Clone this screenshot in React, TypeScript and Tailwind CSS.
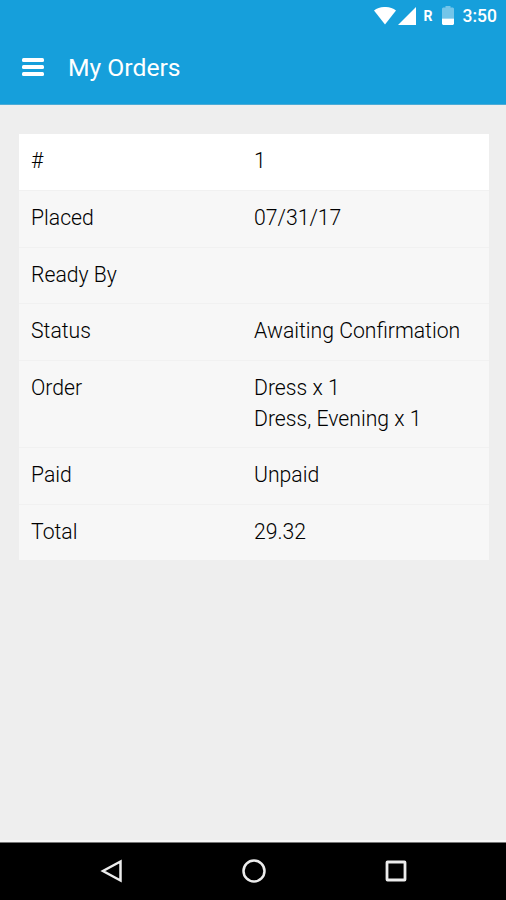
import React from 'react';

interface OrderRow {
  label: string;
  lines: string[];
}

const rows: OrderRow[] = [
  { label: 'Placed', lines: ['07/31/17'] },
  { label: 'Ready By', lines: [''] },
  { label: 'Status', lines: ['Awaiting Confirmation'] },
  { label: 'Order', lines: ['Dress x 1', 'Dress, Evening x 1'] },
  { label: 'Paid', lines: ['Unpaid'] },
  { label: 'Total', lines: ['29.32'] },
];

const StatusBar: React.FC = () => (
  <div className="flex h-[31px] items-center justify-end pr-[9px] text-white">
    <svg className="h-[18px] w-[22px]" viewBox="0 0 22 18" fill="currentColor">
      <path d="M0 3.5C6-1.2 16-1.2 22 3.5L11 17.5z" />
    </svg>
    <svg className="ml-[2px] h-[18px] w-[18px]" viewBox="0 0 18 18" fill="currentColor">
      <path d="M18 0v18H0z" />
    </svg>
    <span className="ml-[8px] w-[9px] pt-px text-[14px] font-bold">R</span>
    <svg className="ml-[9px] h-[19px] w-[12px]" viewBox="0 0 12 19" fill="currentColor">
      <path d="M3.5 0h5v1.5H11l1 1V12.500H0V2.500l1-1h2.500z" opacity="0.4" />
      <path d="M0 12.500h12V18l-1 1H1l-1-1z" />
    </svg>
    <span className="ml-[9px] pt-[2px] text-[17.5px] font-medium">3:50</span>
  </div>
);

const NavBar: React.FC = () => (
  <div className="flex h-[58px] items-center justify-between border-t border-[#777777] bg-black pr-[97px] pb-px pl-[98px] text-[#ececec]">
    <svg className="size-[26px]" viewBox="0 0 26 26" fill="none" stroke="currentColor" strokeWidth={2.5}>
      <path d="M22.500 3.500v19L5 13z" />
    </svg>
    <svg className="size-[26px]" viewBox="0 0 26 26" fill="none" stroke="currentColor" strokeWidth={2.5}>
      <circle cx="13" cy="13" r="10.5" />
    </svg>
    <svg className="size-[26px]" viewBox="0 0 26 26" fill="none" stroke="currentColor" strokeWidth={2.8}>
      <rect x="4" y="4" width="18" height="18" rx="0.5" />
    </svg>
  </div>
);

const App: React.FC = () => {
  return (
    <div className="flex h-[900px] w-[506px] flex-col bg-[#eeeeee] font-['Roboto',sans-serif]">
      <header className="h-[105px] border-b border-[#4cabd6] bg-[#169fdb]">
        <StatusBar />
        <div className="flex h-[72px] items-center pl-[22px] text-white">
          <svg className="h-[18px] w-[22px]" viewBox="0 0 22 18" fill="currentColor">
            <rect width="22" height="4" rx="1.5" />
            <rect y="7" width="22" height="4" rx="1.5" />
            <rect y="14" width="22" height="4" rx="1.5" />
          </svg>
          <h1 className="ml-[24px] pt-px text-[24.7px]">My Orders</h1>
        </div>
      </header>

      <main className="flex-1 pt-[29px] pr-[17px] pl-[19px]">
        <div className="text-[21.2px] leading-[31px] font-light text-black">
          <div className="flex h-[56px] bg-white px-3 pt-[11px]">
            <span className="w-[223px]">#</span>
            <span>1</span>
          </div>
          {rows.map((row) => (
            <div
              key={row.label}
              className="flex min-h-[56.5px] border-t border-[#f1f1f1] bg-[#f7f7f7] px-3 pt-[11px] pb-[13.5px]"
            >
              <span className="w-[223px]">{row.label}</span>
              <div>
                {row.lines.map((line) => (
                  <div key={line}>{line}</div>
                ))}
              </div>
            </div>
          ))}
        </div>
      </main>

      <div className="h-[2px] bg-[#f8f8f8]" />
      <NavBar />
    </div>
  );
};

export default App;
